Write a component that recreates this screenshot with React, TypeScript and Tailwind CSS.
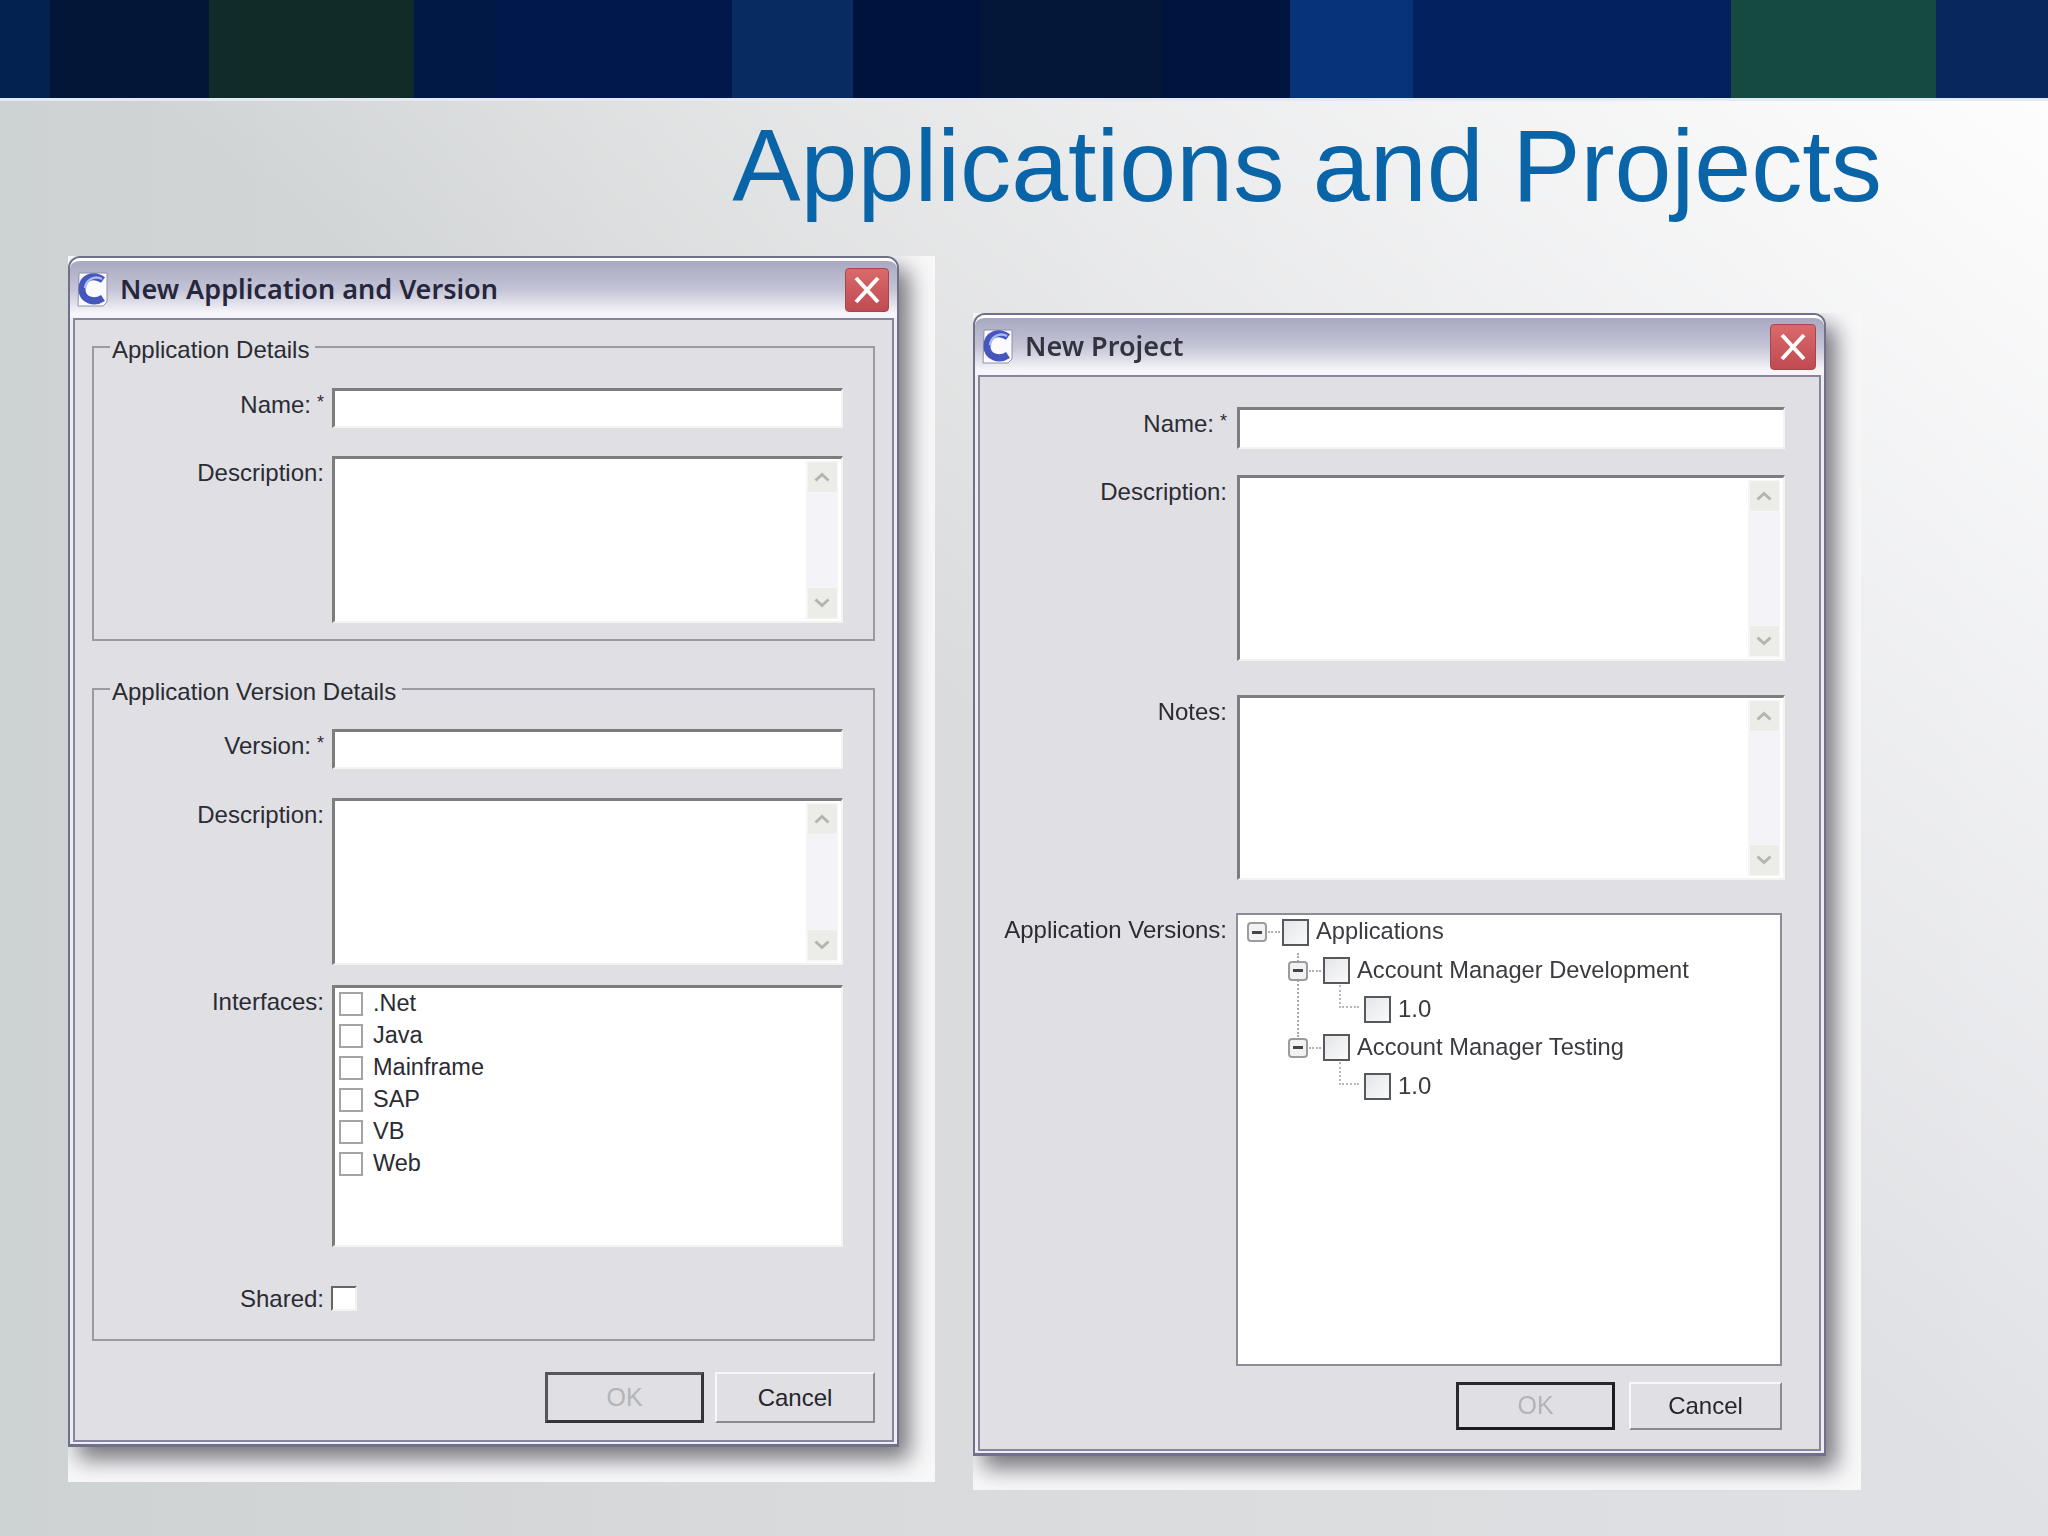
import type { ReactNode } from 'react'

const STRIPES = [
  'w-[50px] bg-[#04224f]',
  'w-[159px] bg-[#041638]',
  'w-[205px] bg-[#112c28]',
  'w-[82px] bg-[#001a46]',
  'w-[236px] bg-[#00184c]',
  'w-[121px] bg-[#082b62]',
  'w-[127px] bg-[#00133f]',
  'w-[182px] bg-[#051738]',
  'w-[128px] bg-[#001440]',
  'w-[123px] bg-[#06337a]',
  'w-[318px] bg-[#03215f]',
  'w-[205px] bg-[#154a40]',
  'w-[112px] bg-[#08285d]',
]

const INTERFACES = ['.Net', 'Java', 'Mainframe', 'SAP', 'VB', 'Web']

const SUNKEN = 'bg-white border-t-[3px] border-l-[3px] border-r-2 border-b-2 border-t-[#7d7d7d] border-l-[#7d7d7d] border-r-[#f3f3f0] border-b-[#f3f3f0]'

function LogoIcon() {
  return (
    <svg viewBox="0 0 34 36" className="w-[34px] h-[36px] shrink-0">
      <path d="M4 1h28v29l-4 4H3z" fill="#fbfbff" stroke="#8f8fa8" strokeWidth="1" />
      <path d="M28 8 C18 1 7 6 7 17 C7 28 19 32 28 26" fill="none" stroke="#4656bc" strokeWidth="7" />
      <path d="M27 7 C19 3 11 8 10 16" fill="none" stroke="#a9bcf2" strokeWidth="2.5" />
    </svg>
  )
}

function CloseButton({ size }: { size: string }) {
  return (
    <div className={`${size} rounded-[4px] bg-gradient-to-b from-[#d96a6a] to-[#c04a52] border border-[#a8454c] flex items-center justify-center shrink-0`}>
      <svg viewBox="0 0 30 30" className="w-[30px] h-[30px]">
        <path d="M4 3 L26 27 M26 3 L4 27" stroke="#ffffff" strokeWidth="4" fill="none" />
      </svg>
    </div>
  )
}

function Dialog({ title, titleClass, close, children }: { title: string; titleClass: string; close: string; children: ReactNode }) {
  return (
    <div className="border-2 border-b-[3px] border-[#6f7089] rounded-t-[12px] bg-[#eeeef2] flex flex-col shadow-[10px_12px_22px_rgba(60,60,70,0.7)]">
      <div className="h-[60px] rounded-t-[10px] border-t-[3px] border-white bg-[linear-gradient(to_bottom,#a8a8c2_0%,#c4c4d6_50%,#f6f6fa_92%)] flex items-center pl-[5px] pr-[8px]">
        <LogoIcon />
        <span className={`ml-[11px] flex-1 text-[#26263c] font-['Noto_Sans',sans-serif] font-semibold ${titleClass}`}>{title}</span>
        <CloseButton size={close} />
      </div>
      <div className="mx-[3px] mb-[2px] flex-1 border-2 border-[#85859e] bg-[#dfdfe4]">{children}</div>
    </div>
  )
}

function Chevron({ up }: { up?: boolean }) {
  return (
    <div className="h-[32px] w-[31px] bg-[#ecede8] border border-[#f7f7f5] rounded-[3px] flex items-center justify-center">
      <svg viewBox="0 0 16 10" className="w-[16px] h-[10px]">
        <path d={up ? 'M1.5 8.5 L8 2.5 L14.5 8.5' : 'M1.5 1.5 L8 7.5 L14.5 1.5'} fill="none" stroke="#b4b4b4" strokeWidth="3" />
      </svg>
    </div>
  )
}

function Memo({ height }: { height: string }) {
  return (
    <div className={`${SUNKEN} ${height} flex justify-end pr-[3px] py-[2px]`}>
      <div className="w-[32px] bg-[#f3f3f8] flex flex-col justify-between items-center">
        <Chevron up />
        <Chevron />
      </div>
    </div>
  )
}

function Label({ text, required, width }: { text: string; required?: boolean; width: string }) {
  return (
    <div className={`${width} shrink-0 flex justify-end text-[24px] leading-[28px] text-[#2b2b33]`}>
      {text}
      {required && <span className="ml-[6px] text-[18px] leading-[22px]">*</span>}
    </div>
  )
}

function Row({ label, required, width, gap, offset, className, field }: { label: string; required?: boolean; width: string; gap: string; offset: string; className: string; field: ReactNode }) {
  return (
    <div className={`flex ${className}`}>
      <div className={offset}>
        <Label text={label} required={required} width={width} />
      </div>
      <div className={`${gap} flex-1`}>{field}</div>
    </div>
  )
}

function Group({ legend, className, children }: { legend: string; className: string; children: ReactNode }) {
  return (
    <fieldset className={`border-2 border-[#9a9aa2] pl-0 ${className}`}>
      <legend className="ml-[16px] pl-[2px] pr-[6px] text-[24px] leading-[30px] h-[24px] text-[#2b2b33]">{legend}</legend>
      {children}
    </fieldset>
  )
}

function Buttons({ ok, cancel, height, className, okBorder }: { ok: string; cancel: string; height: string; className: string; okBorder: string }) {
  return (
    <div className={`flex justify-end ${height} ${className}`}>
      <button className={`${ok} ${okBorder} bg-[#dfdfe4] text-[25px] text-[#b4b4b8]`}>OK</button>
      <button className={`${cancel} bg-[#dfdfe4] border-2 border-t-[#f8f8f8] border-l-[#f8f8f8] border-r-[#8a8a8e] border-b-[#8a8a8e] text-[24px] text-[#26262c]`}>Cancel</button>
    </div>
  )
}

function NewApplication() {
  const lw = 'w-[230px]'
  return (
    <Dialog title="New Application and Version" titleClass="text-[27px]" close="w-[44px] h-[44px]">
      <div className="pl-[17px] pr-[17px] pt-[15px]">
        <Group legend="Application Details" className="h-[306px]">
          <Row label="Name:" required width={lw} gap="ml-[8px] mr-[30px]" offset="pt-[3px]" className="mt-[29px]" field={<div className={`${SUNKEN} h-[40px]`} />} />
          <Row label="Description:" width={lw} gap="ml-[8px] mr-[30px]" offset="pt-[3px]" className="mt-[28px]" field={<Memo height="h-[167px]" />} />
        </Group>
        <Group legend="Application Version Details" className="mt-[36px] h-[664px]">
          <Row label="Version:" required width={lw} gap="ml-[8px] mr-[30px]" offset="pt-[3px]" className="mt-[28px]" field={<div className={`${SUNKEN} h-[40px]`} />} />
          <Row label="Description:" width={lw} gap="ml-[8px] mr-[30px]" offset="pt-[3px]" className="mt-[29px]" field={<Memo height="h-[167px]" />} />
          <Row
            label="Interfaces:"
            width={lw}
            gap="ml-[8px] mr-[30px]"
            offset="pt-[3px]"
            className="mt-[20px]"
            field={
              <div className={`${SUNKEN} h-[262px] pl-[4px]`}>
                {INTERFACES.map((item) => (
                  <div key={item} className="h-[32px] flex items-center text-[23.5px] text-[#2b2b33]">
                    <span className="w-[24px] h-[24px] border-2 border-[#a4a4a4] bg-white" />
                    <span className="ml-[10px]">{item}</span>
                  </div>
                ))}
              </div>
            }
          />
          <Row
            label="Shared:"
            width={lw}
            gap="ml-[7px]"
            offset="-mt-[1px]"
            className="mt-[39px]"
            field={<div className="w-[26px] h-[25px] bg-white border-2 border-t-[#666666] border-l-[#666666] border-r-[#f2f2f2] border-b-[#f2f2f2]" />}
          />
        </Group>
        <Buttons ok="w-[159px] mr-[11px]" cancel="w-[160px]" height="h-[51px]" className="mt-[31px]" okBorder="border-[3px] border-t-[#55555a] border-l-[#55555a] border-r-[#33333a] border-b-[#33333a]" />
      </div>
    </Dialog>
  )
}

function Expander({ left }: { left: string }) {
  return (
    <span className={`${left} relative w-[20px] h-[20px] rounded-[4px] border-2 border-[#9c9ca0] bg-[#f2f2f2] flex items-center justify-center shrink-0`}>
      <span className="w-[10px] h-[3px] bg-[#44444a]" />
      <span className="absolute left-[19px] top-[7px] w-[12px] border-t-2 border-dotted border-[#b0b0b0]" />
    </span>
  )
}

function TreeBox() {
  return <span className="block w-[27px] h-[27px] border-2 border-[#58585c] bg-gradient-to-br from-[#e3e6ea] to-[#fafafa] shrink-0" />
}

function TreeParent({ name, level }: { name: string; level: 0 | 1 }) {
  return (
    <div className="relative h-[38.5px] flex items-center text-[23.7px] text-[#3a3a40]">
      <Expander left={level === 0 ? 'ml-[9px]' : 'ml-[50px]'} />
      <span className="ml-[15px]"><TreeBox /></span>
      <span className="ml-[7px]">{name}</span>
    </div>
  )
}

function TreeLeaf() {
  return (
    <div className="relative h-[38.5px] flex items-center text-[24px] text-[#3a3a40] pl-[126px]">
      <span className="absolute left-[101px] top-[-5px] h-[23px] w-[20px] border-l-2 border-b-2 border-dotted border-[#b8b8b8]" />
      <TreeBox />
      <span className="ml-[7px]">1.0</span>
    </div>
  )
}

function NewProject() {
  const lw = 'w-[247px]'
  return (
    <Dialog title="New Project" titleClass="text-[27px] text-[#33333f]" close="w-[46px] h-[46px]">
      <div className="pt-[30px] pr-[34px]">
        <Row label="Name:" required width={lw} gap="ml-[10px]" offset="pt-[3px]" className="" field={<div className={`${SUNKEN} h-[42px]`} />} />
        <Row label="Description:" width={lw} gap="ml-[10px]" offset="pt-[3px]" className="mt-[26px]" field={<Memo height="h-[186px]" />} />
        <Row label="Notes:" width={lw} gap="ml-[10px]" offset="pt-[3px]" className="mt-[34px]" field={<Memo height="h-[185px]" />} />
        <Row
          label="Application Versions:"
          width={lw}
          gap="ml-[9px] mr-[3px]"
          offset="pt-[3px]"
          className="mt-[33px]"
          field={
            <div className="relative h-[453px] bg-white border-2 border-[#8c8c94] pt-0">
              <span className="absolute left-[59px] top-[38px] h-[84px] border-l-2 border-dotted border-[#a8a8a8]" />
              <div className="-mt-[2px]">
                <TreeParent name="Applications" level={0} />
                <TreeParent name="Account Manager Development" level={1} />
                <TreeLeaf />
                <TreeParent name="Account Manager Testing" level={1} />
                <TreeLeaf />
              </div>
            </div>
          }
        />
        <Buttons ok="w-[159px] mr-[14px]" cancel="w-[153px]" height="h-[48px]" className="mt-[16px] mr-[3px]" okBorder="border-[3px] border-t-[#2a2a2e] border-l-[#2a2a2e] border-r-[#1c1c20] border-b-[#1c1c20]" />
      </div>
    </Dialog>
  )
}

export default function App() {
  return (
    <div className="w-[2048px] h-[1536px] overflow-hidden flex flex-col font-['Liberation_Sans',Arial,sans-serif] bg-[linear-gradient(to_bottom_left,#ffffff_0%,#ffffff00_50%),linear-gradient(to_right,#cdd2d2_0%,#d9dadb_40%,#e0e1e5_100%)]">
      <div className="h-[101px] flex shrink-0 border-b-[3px] border-[#e4e9f4]">
        {STRIPES.map((s) => (
          <div key={s} className={s} />
        ))}
      </div>
      <div className="h-[155px] flex justify-end items-center pr-[166px] pb-[24px] shrink-0">
        <h1 className="text-[102.4px] leading-none text-[#0a65a8] whitespace-nowrap">Applications and Projects</h1>
      </div>
      <div className="flex items-start pl-[68px] blur-[0.4px]">
        <div className="w-[867px] h-[1226px] pr-[36px] bg-[#f8f8f9] overflow-hidden">
          <div className="h-[1191px] flex flex-col [&>div]:flex-1">
            <NewApplication />
          </div>
        </div>
        <div className="w-[888px] h-[1177px] ml-[38px] mt-[57px] pr-[35px] bg-[#f8f8f9] overflow-hidden">
          <div className="h-[1143px] flex flex-col [&>div]:flex-1">
            <NewProject />
          </div>
        </div>
      </div>
    </div>
  )
}
